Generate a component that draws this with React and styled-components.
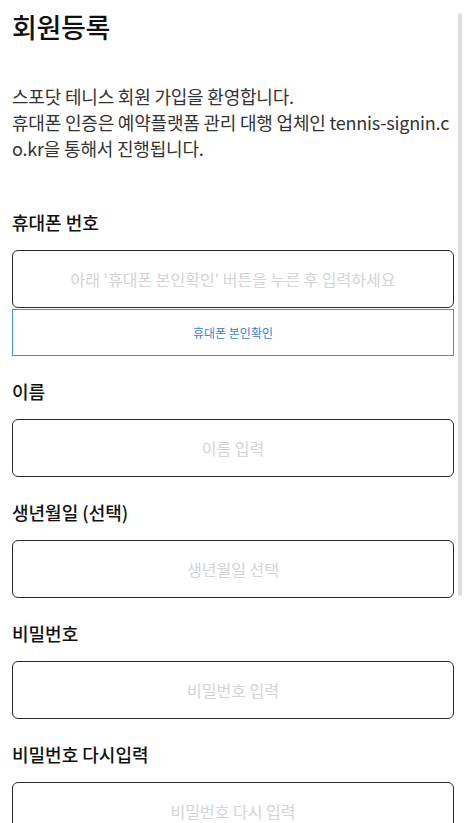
import React from 'react'
import styled, { createGlobalStyle } from 'styled-components'

const GlobalStyle = createGlobalStyle`
  html, body {
    margin: 0;
    padding: 0;
    background: #ffffff;
    overflow: hidden;
  }
  * {
    box-sizing: border-box;
  }
`;

const fields = [
  { label: '이름', placeholder: '이름 입력' },
  { label: '생년월일 (선택)', placeholder: '생년월일 선택' },
  { label: '비밀번호', placeholder: '비밀번호 입력', type: 'password' },
  { label: '비밀번호 다시입력', placeholder: '비밀번호 다시 입력', type: 'password' },
];

export default function App() {
  return (
    <>
      <GlobalStyle />
      <Page>
        <Title>회원등록</Title>
        <Intro>
          스포닷 테니스 회원 가입을 환영합니다.
          <br />
          휴대폰 인증은 예약플랫폼 관리 대행 업체인 tennis-signin.co.kr을 통해서 진행됩니다.
        </Intro>

        <Field $first>
          <Label>휴대폰 번호</Label>
          <Input placeholder="아래 '휴대폰 본인확인' 버튼을 누른 후 입력하세요" readOnly />
          <VerifyButton type="button">휴대폰 본인확인</VerifyButton>
        </Field>

        {fields.map((f) => (
          <Field key={f.label}>
            <Label>{f.label}</Label>
            <Input type={f.type || 'text'} placeholder={f.placeholder} />
          </Field>
        ))}
      </Page>
      <ScrollThumb />
    </>
  )
}

const Page = styled.div`
  padding: 9px 12px 40px;
  font-family: "Noto Sans CJK KR", "Noto Sans", sans-serif;
  color: #111;
`;

const Title = styled.h1`
  margin: 0;
  font-size: 27px;
  line-height: 36px;
  font-weight: 500;
  letter-spacing: -0.3px;
  color: #111;
`;

const Intro = styled.p`
  margin: 38px 0 0;
  font-size: 18px;
  line-height: 26px;
  letter-spacing: -0.2px;
  color: #333;
  word-break: break-all;
`;

const Field = styled.div`
  display: flex;
  flex-direction: column;
  margin-top: ${(p) => (p.$first ? '49px' : '23px')};
`;

const Label = styled.div`
  font-size: 18px;
  line-height: 24px;
  font-weight: 500;
  letter-spacing: 0;
  color: #111;
  margin-bottom: 16px;
`;

const Input = styled.input`
  width: 100%;
  height: 58px;
  border: 1px solid #2b2b2b;
  border-radius: 6px;
  background: #fff;
  text-align: center;
  font-family: inherit;
  font-size: 16px;
  letter-spacing: 0;
  color: #111;
  outline: none;

  &::placeholder {
    color: #d4d4d4;
  }
`;

const VerifyButton = styled.button`
  width: 100%;
  height: 47px;
  margin-top: 1px;
  border: 1px solid #4a8fdf;
  border-radius: 0;
  background: #fff;
  color: #3a7fd5;
  font-family: inherit;
  font-size: 12px;
  letter-spacing: 0;
  cursor: pointer;
`;

const ScrollThumb = styled.div`
  position: fixed;
  top: 13px;
  right: 4px;
  width: 4px;
  height: 583px;
  border-radius: 2px;
  background: #dedede;
`;
